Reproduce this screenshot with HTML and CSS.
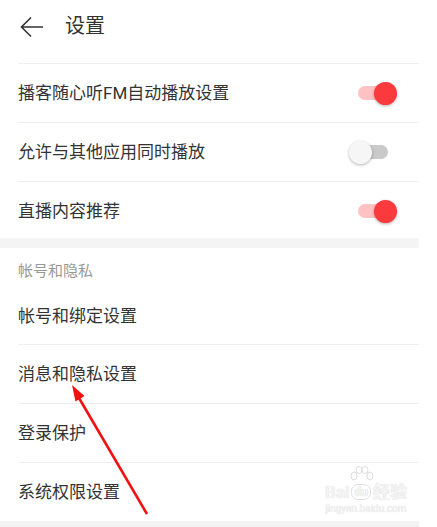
FILE: index.html
```html
<!DOCTYPE html>
<html lang="zh-CN">
<head>
    <meta charset="UTF-8">
    <meta name="viewport" content="width=device-width, initial-scale=1.0">
    <title>设置</title>
    <link rel="stylesheet" href="styles.css">
</head>
<body>
    <div class="screen">
        <div class="header">
            <svg class="back" width="24" height="22" viewBox="0 0 24 22">
                <path d="M23 11H2M11 1.5L1.5 11L11 20.5" fill="none" stroke="#333" stroke-width="1.6"/>
            </svg>
            <h1>设置</h1>
        </div>

        <div class="group">
            <div class="row">
                <span>播客随心听FM自动播放设置</span>
                <div class="switch on"><div class="track"></div><div class="knob"></div></div>
            </div>
            <div class="row">
                <span>允许与其他应用同时播放</span>
                <div class="switch"><div class="track"></div><div class="knob"></div></div>
            </div>
            <div class="row last">
                <span>直播内容推荐</span>
                <div class="switch on"><div class="track"></div><div class="knob"></div></div>
            </div>
        </div>

        <div class="group second">
            <div class="group-title">帐号和隐私</div>
            <div class="row"><span>帐号和绑定设置</span></div>
            <div class="row"><span>消息和隐私设置</span></div>
            <div class="row"><span>登录保护</span></div>
            <div class="row"><span>系统权限设置</span></div>
        </div>

        <!-- annotation arrow drawn over the screenshot -->
        <svg class="arrow" width="419" height="527" viewBox="0 0 419 527">
            <line x1="147" y1="514" x2="79" y2="398" stroke="#f21010" stroke-width="2.6"/>
            <polygon points="72,385 84.5,396 75.5,401.5" fill="#f21010"/>
        </svg>

        <div class="watermark">
            <svg class="paw-icon" width="26" height="16" viewBox="0 0 26 16">
                <g fill="none" stroke="#ddd" stroke-width="1">
                    <ellipse cx="5" cy="10" rx="3" ry="4"/>
                    <ellipse cx="10" cy="4" rx="3" ry="3.5"/>
                    <ellipse cx="16" cy="4" rx="3" ry="3.5"/>
                    <ellipse cx="21" cy="10" rx="3" ry="4"/>
                </g>
            </svg>
            <div class="wm-top"><span>Bai</span><span class="paw">du</span><span>经验</span></div>
            <div class="wm-url">jingyan.baidu.com</div>
        </div>
    </div>
</body>
</html>
```

FILE: styles.css
```css
body {
    margin: 0;
    background-color: #fff;
    font-family: Roboto, "Noto Sans CJK SC", sans-serif;
    color: #333;
}
.screen {
    position: relative;
    width: 419px;
    height: 527px;
    background-color: #f4f4f4;
    overflow: hidden;
}
.header {
    height: 63px;
    display: flex;
    align-items: center;
    padding-left: 20px;
    background-color: #fff;
}
.header .back {
    margin-top: -10px;
}
.header h1 {
    margin: -14px 0 0 21px;
    font-size: 20px;
    font-weight: normal;
    color: #333;
}
.group {
    background-color: #fff;
    padding-left: 18px;
}
.second {
    margin-top: 10px;
}
.group-title {
    height: 39px;
    padding-top: 15px;
    box-sizing: border-box;
    font-size: 15px;
    line-height: 17px;
    color: #999;
}
.row {
    height: 59px;
    box-sizing: border-box;
    display: flex;
    align-items: center;
    justify-content: space-between;
    padding-right: 22px;
    padding-bottom: 4px;
    border-top: 1px solid #eeeeee;
    font-size: 17px;
}
.row.last {
    height: 57px;
    padding-bottom: 2px;
}
.group-title + .row {
    border-top: none;
    height: 57px;
    padding-bottom: 2px;
}
.row .switch {
    margin-top: 4px;
}
.switch {
    position: relative;
    width: 48px;
    height: 24px;
}
.switch .track {
    position: absolute;
    left: 9px;
    top: 5px;
    width: 30px;
    height: 14px;
    border-radius: 7px;
    background-color: #c9c9c9;
}
.switch .knob {
    position: absolute;
    left: 0;
    top: 1px;
    width: 23px;
    height: 23px;
    border-radius: 50%;
    background-color: #f6f6f6;
    box-shadow: 0 1px 3px rgba(0, 0, 0, 0.3);
}
.switch.on .track {
    background-color: #ffc2c2;
}
.switch.on .knob {
    left: 25px;
    background-color: #fb3a3e;
}
.arrow {
    position: absolute;
    left: 0;
    top: 0;
}
.watermark {
    position: absolute;
    left: 320px;
    top: 466px;
    width: 92px;
    display: flex;
    flex-direction: column;
    align-items: center;
    color: #f4f4f4;
    text-shadow: 0 0 1px #cfcfcf;
}
.paw-icon {
    margin-left: -8px;
}
.wm-top {
    display: flex;
    align-items: center;
    gap: 2px;
    font-size: 17px;
    font-weight: bold;
    line-height: 20px;
}
.wm-top .paw {
    font-size: 12px;
    line-height: 14px;
    padding: 0 2px;
    border: 1px solid #e0e0e0;
    border-radius: 7px;
}
.wm-url {
    font-size: 10px;
    line-height: 13px;
}
```
